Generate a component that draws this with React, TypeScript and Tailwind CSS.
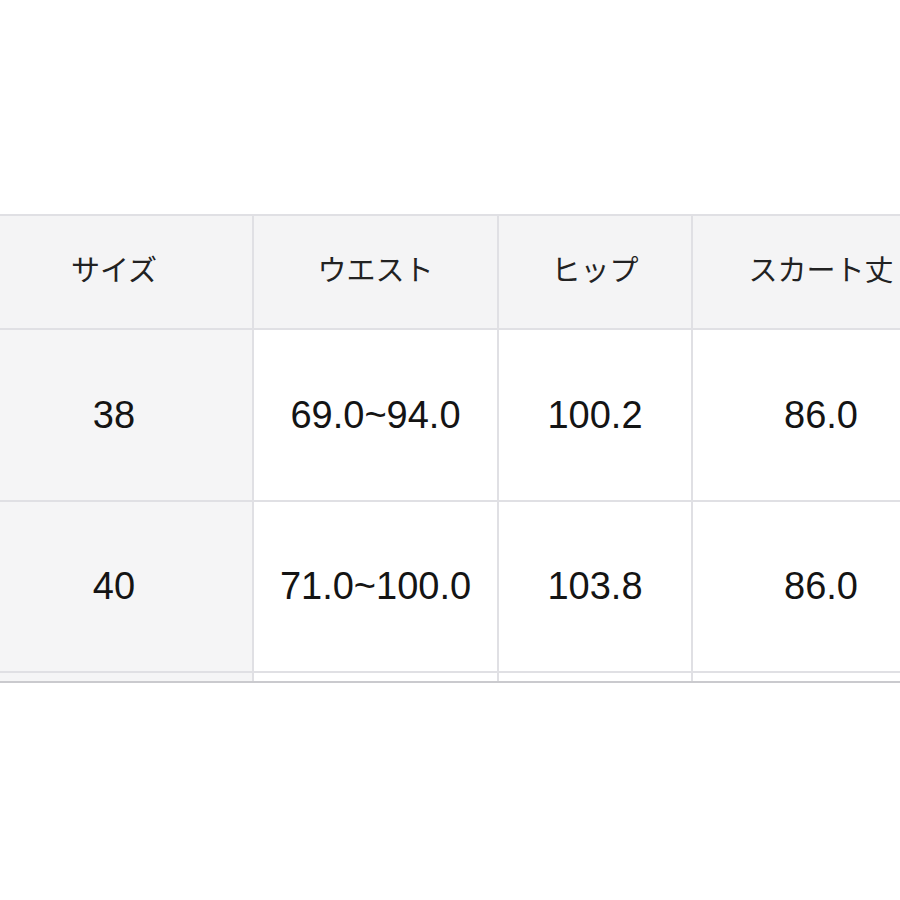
const headers = ["サイズ", "ウエスト", "ヒップ", "スカート丈"];

const rows = [
  ["38", "69.0~94.0", "100.2", "86.0"],
  ["40", "71.0~100.0", "103.8", "86.0"],
];

const widths = ["w-[278px]", "w-[245px]", "w-[194px]", "w-[258px]"];

export default function App() {
  return (
    <div className="w-[900px] h-[900px] overflow-hidden bg-white pt-[214px] font-['Liberation_Sans','Noto_Sans_CJK_JP',sans-serif]">
      <div className="ml-[-24px] w-max border-t-2 border-[#e0e0e4]">
        <div className="flex h-[114px]">
          {headers.map((h, i) => (
            <div
              key={h}
              className={`${widths[i]} flex shrink-0 items-center justify-center border-r-2 border-b-2 border-[#e0e0e4] bg-[#f4f4f5] text-[29px] text-[#222]`}
            >
              {h}
            </div>
          ))}
        </div>
        {rows.map((r, ri) => (
          <div key={ri} className={`flex ${ri === 0 ? "h-[172px]" : "h-[171px]"}`}>
            {r.map((c, i) => (
              <div
                key={i}
                className={`${widths[i]} flex shrink-0 items-center justify-center border-r-2 border-b-2 border-[#e0e0e4] text-[38px] text-[#141414] ${i === 0 ? "bg-[#f5f5f6]" : "bg-white"}`}
              >
                {c}
              </div>
            ))}
          </div>
        ))}
        <div className="flex h-[10px] border-b-2 border-[#cacace]">
          {widths.map((w, i) => (
            <div
              key={i}
              className={`${w} shrink-0 border-r-2 border-[#e0e0e4] ${i === 0 ? "bg-[#f5f5f6]" : "bg-white"}`}
            />
          ))}
        </div>
      </div>
    </div>
  );
}
